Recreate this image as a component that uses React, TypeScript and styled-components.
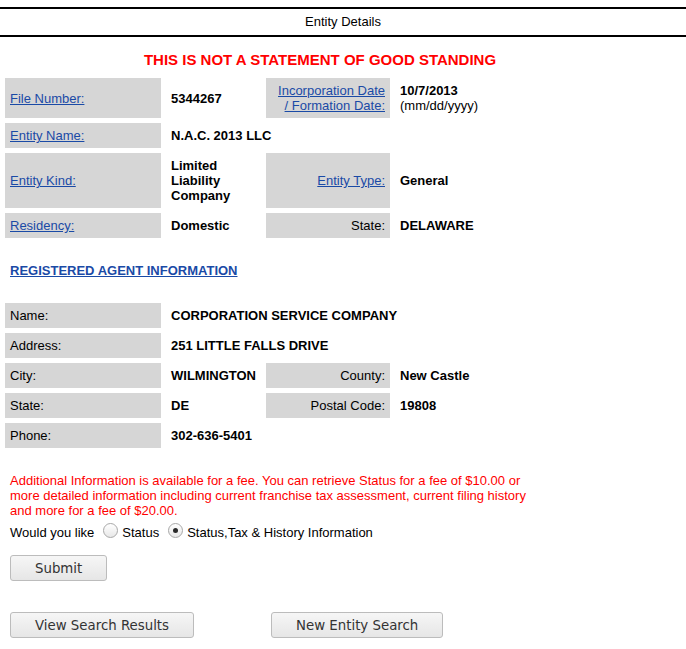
import React from 'react';
import styled, { createGlobalStyle } from 'styled-components';

const GlobalStyle = createGlobalStyle`
  body {
    margin: 0;
    background: #ffffff;
    font-family: "Liberation Sans", Arial, sans-serif;
    font-size: 13px;
    line-height: 15px;
    color: #000000;
  }
`;

const LINK = '#1a4aa6';

const Page = styled.div`
  padding-top: 7px;
`;

const TitleBar = styled.div`
  border-top: 2px solid #000;
  border-bottom: 2px solid #000;
  height: 26px;
  line-height: 26px;
  text-align: center;
`;

const Warning = styled.div`
  width: 640px;
  margin: 15px 0 5px;
  text-align: center;
  font-size: 15px;
  line-height: 16px;
  font-weight: bold;
  color: #ff0000;
`;

const Grid = styled.div`
  display: grid;
  width: 640px;
  box-sizing: border-box;
  grid-template-columns: 156px 95px 124px 1fr;
  gap: 5px;
  padding: 5px;
`;

const Label = styled.div<{ $right?: boolean }>`
  background: #d6d6d6;
  padding: 5px;
  display: flex;
  align-items: center;
  justify-content: ${(p) => (p.$right ? 'flex-end' : 'flex-start')};
  text-align: ${(p) => (p.$right ? 'right' : 'left')};
`;

const LabelLink = styled.a`
  color: ${LINK};
  text-decoration: underline;
`;

const Value = styled.div<{ $span?: boolean }>`
  padding: 5px;
  font-weight: bold;
  display: flex;
  flex-direction: column;
  justify-content: center;
  grid-column: ${(p) => (p.$span ? 'span 3' : 'auto')};
`;

const Plain = styled.span`
  font-weight: normal;
`;

const SectionLink = styled.a`
  display: inline-block;
  margin: 20px 0 20px 10px;
  font-weight: bold;
  color: ${LINK};
  text-decoration: underline;
`;

const FeeNote = styled.p`
  width: 530px;
  margin: 20px 0 0 10px;
  color: #ff0000;
`;

const ChoiceRow = styled.div`
  display: flex;
  align-items: center;
  margin: 3px 0 0 10px;
  height: 22px;
`;

const RadioLabel = styled.label`
  display: inline-flex;
  align-items: center;
`;

const Radio = styled.input`
  appearance: none;
  width: 15px;
  height: 15px;
  margin: 0 4px 0 9px;
  border: 1px solid #a8a8a8;
  border-radius: 50%;
  background: linear-gradient(#ffffff, #e8e8e8);
  box-sizing: border-box;
  position: relative;
  top: -2px;

  &:checked::after {
    content: '';
    position: absolute;
    left: 4px;
    top: 4px;
    width: 5px;
    height: 5px;
    border-radius: 50%;
    background: #2a2a2a;
  }
`;

const SubmitRow = styled.div`
  margin: 12px 0 0 10px;
`;

const BottomButtons = styled.div`
  display: flex;
  gap: 77px;
  margin: 31px 0 0 10px;
`;

const Button = styled.button`
  height: 26px;
  padding: 0 24px;
  font-family: "DejaVu Sans", Verdana, sans-serif;
  font-size: 13.33px;
  color: #333;
  background: linear-gradient(#f6f6f6, #e6e6e6);
  border: 1px solid #bcbcbc;
  border-radius: 3px;
`;

type Cell = { label: string; value?: React.ReactNode; link?: boolean; right?: boolean };
type Row = Cell[];

const entityRows: Row[] = [
  [
    { label: 'File Number:', value: '5344267', link: true },
    {
      label: 'Incorporation Date / Formation Date:',
      value: (
        <>
          10/7/2013
          <br />
          <Plain>(mm/dd/yyyy)</Plain>
        </>
      ),
      link: true,
      right: true
    }
  ],
  [{ label: 'Entity Name:', value: 'N.A.C. 2013 LLC', link: true }],
  [
    {
      label: 'Entity Kind:',
      value: (
        <>
          Limited
          <br />
          Liability
          <br />
          Company
        </>
      ),
      link: true
    },
    { label: 'Entity Type:', value: 'General', link: true, right: true }
  ],
  [
    { label: 'Residency:', value: 'Domestic', link: true },
    { label: 'State:', value: 'DELAWARE', right: true }
  ]
];

const agentRows: Row[] = [
  [{ label: 'Name:', value: 'CORPORATION SERVICE COMPANY' }],
  [{ label: 'Address:', value: '251 LITTLE FALLS DRIVE' }],
  [
    { label: 'City:', value: 'WILMINGTON' },
    { label: 'County:', value: 'New Castle', right: true }
  ],
  [
    { label: 'State:', value: 'DE' },
    { label: 'Postal Code:', value: '19808', right: true }
  ],
  [{ label: 'Phone:', value: '302-636-5401' }]
];

const DetailGrid = ({ rows }: { rows: Row[] }) => (
  <Grid>
    {rows.map((row, r) =>
      row.map((cell, c) => (
        <React.Fragment key={`${r}-${c}`}>
          <Label $right={cell.right}>
            {cell.link ? <LabelLink href="#">{cell.label}</LabelLink> : cell.label}
          </Label>
          <Value $span={row.length === 1}>{cell.value}</Value>
        </React.Fragment>
      ))
    )}
  </Grid>
);

const App = () => {
  return (
    <>
      <GlobalStyle />
      <Page>
        <TitleBar>Entity Details</TitleBar>
        <Warning>THIS IS NOT A STATEMENT OF GOOD STANDING</Warning>
        <DetailGrid rows={entityRows} />
        <SectionLink href="#">REGISTERED AGENT INFORMATION</SectionLink>
        <DetailGrid rows={agentRows} />
        <FeeNote>
          Additional Information is available for a fee. You can retrieve Status for a fee of $10.00 or more detailed
          information including current franchise tax assessment, current filing history and more for a fee of $20.00.
        </FeeNote>
        <ChoiceRow>
          Would you like
          <RadioLabel>
            <Radio type="radio" name="info" value="status" />
            Status
          </RadioLabel>
          <RadioLabel>
            <Radio type="radio" name="info" value="full" defaultChecked />
            Status,Tax &amp; History Information
          </RadioLabel>
        </ChoiceRow>
        <SubmitRow>
          <Button>Submit</Button>
        </SubmitRow>
        <BottomButtons>
          <Button>View Search Results</Button>
          <Button>New Entity Search</Button>
        </BottomButtons>
      </Page>
    </>
  );
};

export default App;
